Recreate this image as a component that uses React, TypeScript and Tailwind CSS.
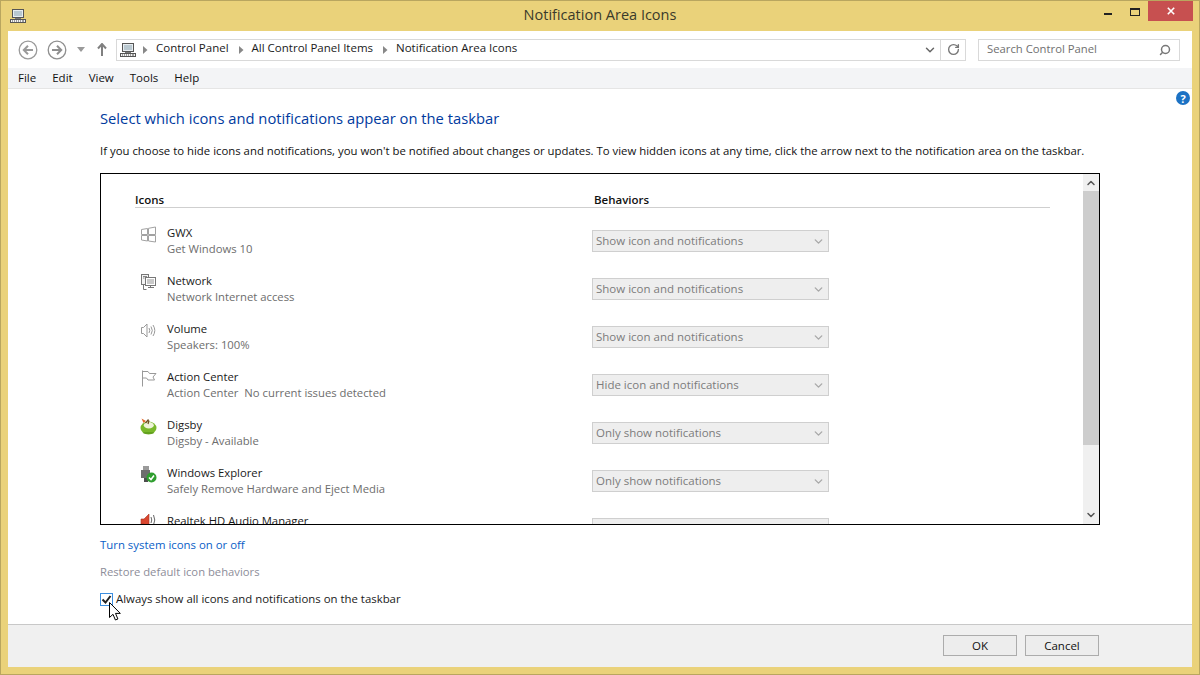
import { ChevronDown, ChevronUp, RotateCw, Search } from "lucide-react";

const font = "font-['Open_Sans','Noto_Sans',sans-serif]";

const rows = [
  { name: "GWX", sub: "Get Windows 10", value: "Show icon and notifications", icon: "gwx" },
  { name: "Network", sub: "Network Internet access", value: "Show icon and notifications", icon: "network" },
  { name: "Volume", sub: "Speakers: 100%", value: "Show icon and notifications", icon: "volume" },
  { name: "Action Center", sub: "Action Center  No current issues detected", value: "Hide icon and notifications", icon: "flag" },
  { name: "Digsby", sub: "Digsby - Available", value: "Only show notifications", icon: "digsby" },
  { name: "Windows Explorer", sub: "Safely Remove Hardware and Eject Media", value: "Only show notifications", icon: "usb" },
  { name: "Realtek HD Audio Manager", sub: "", value: "", icon: "realtek" },
];

function Computer({ className }: { className: string }) {
  return (
    <svg viewBox="0 0 16 16" className={className}>
      <rect x="2.5" y="1.5" width="11" height="8" fill="#e8edf0" stroke="#555" />
      <rect x="4" y="3" width="8" height="5" fill="#b9c8d0" />
      <rect x="5" y="10" width="6" height="1" fill="#777" />
      <rect x="0.5" y="11.5" width="15" height="3" fill="#f4f4f4" stroke="#555" />
      <path d="M2 13h1M4 13h1M6 13h1M8 13h1M10 13h1M12 13h2" stroke="#444" strokeWidth="1" />
    </svg>
  );
}

function NavArrow({ flip, tone }: { flip?: boolean; tone: string }) {
  return (
    <svg viewBox="0 0 20 20" className={`h-5 w-5 ${flip ? "-scale-x-100" : ""}`}>
      <circle cx="10" cy="10" r="8.8" fill="#fff" stroke={tone} strokeWidth="1.3" />
      <path d="M15 10H6M10 5.8 5.8 10l4.2 4.2" fill="none" stroke={tone} strokeWidth="2" />
    </svg>
  );
}

function Sep() {
  return (
    <svg viewBox="0 0 5 8" className="ml-[10px] mr-[8px] h-2 w-[5px] shrink-0">
      <path d="M0 0l4.5 4L0 8z" fill="#888" />
    </svg>
  );
}

function RowIcon({ kind }: { kind: string }) {
  if (kind === "gwx")
    return (
      <svg viewBox="0 0 17 17" className="h-[17px] w-[17px]">
        <path d="M1.5 3.5 7.5 2.5v6h-6zM8.5 2.3 15.5 1v7.500h-7zM1.500 9.500h6v5.500l-6-1zM8.500 9.500h7V16l-7-1z" fill="#fff" stroke="#a2a2a2" />
      </svg>
    );
  if (kind === "network")
    return (
      <svg viewBox="0 0 17 17" className="h-[17px] w-[17px]">
        <rect x="1.500" y="0.500" width="7" height="10" fill="#f4f4f4" stroke="#777" />
        <rect x="5.500" y="3.500" width="10" height="8" fill="#fff" stroke="#777" />
        <rect x="7" y="5" width="7" height="5" fill="#c9c9c9" />
        <path d="M8 13.500h6M10.500 12v1.500M3.500 11v4.500h3" stroke="#777" fill="none" />
        <path d="M3 2.500h4M3 4h1.500" stroke="#888" />
      </svg>
    );
  if (kind === "volume")
    return (
      <svg viewBox="0 0 17 17" className="h-[17px] w-[17px]">
        <path d="M1.500 5.500h2l3.500-3.500v13l-3.500-3.500h-2z" fill="#fff" stroke="#999" />
        <path d="M9 6q1.500 2.500 0 5M11 4.500q2.600 4 0 8M13 3q3.600 5.500 0 11" fill="none" stroke="#999" />
      </svg>
    );
  if (kind === "flag")
    return (
      <svg viewBox="0 0 17 17" className="h-[17px] w-[17px]">
        <path d="M2.500 0.500v16M2.500 1.500h5.500l1.500 2h6.500l-3 3.500 1.500 3H8l-1.500-2h-4" fill="#fff" stroke="#999" />
      </svg>
    );
  if (kind === "digsby")
    return (
      <svg viewBox="0 0 17 17" className="h-[17px] w-[17px]">
        <ellipse cx="8.500" cy="10" rx="8" ry="6.500" fill="#79b82a" />
        <ellipse cx="8.800" cy="7.300" rx="5" ry="3.200" fill="#eef3d8" />
        <path d="M1.500 0.500l4.500 2.500-2.500 2z" fill="#e0672a" />
        <path d="M5.500 5l3-3.500M8 6l1-3.500" stroke="#6b4a22" strokeWidth="1.200" />
        <path d="M3.500 15h10" stroke="#4f8a15" />
      </svg>
    );
  if (kind === "usb")
    return (
      <svg viewBox="0 0 17 17" className="h-[17px] w-[17px]">
        <rect x="3" y="0" width="6" height="4" fill="#9a9a9a" />
        <rect x="1" y="4" width="9" height="8" fill="#6d6d6d" />
        <rect x="4" y="12" width="4" height="4" fill="#4d4d4d" />
        <circle cx="11.500" cy="11.500" r="5" fill="#2f9e2f" />
        <path d="M9 11.500l2 2 3-4" fill="none" stroke="#fff" strokeWidth="1.500" />
      </svg>
    );
  return (
    <svg viewBox="0 0 17 17" className="h-[17px] w-[17px]">
      <path d="M1 5h3l5-5v14l-5-4H1z" fill="#d9462f" stroke="#a8321f" strokeWidth="0.600" />
      <path d="M11 3q1.500 3 0 6M13.500 1q2.500 5 0 10" fill="none" stroke="#666" />
    </svg>
  );
}

function Row({ name, sub, value, icon }: { name: string; sub: string; value: string; icon: string }) {
  return (
    <div className="flex h-12 shrink-0">
      <div className="flex w-[491px] shrink-0 pl-[39px] pt-[4px]">
        <div className="w-[27px]">
          <RowIcon kind={icon} />
        </div>
        <div className="-mt-[1px] whitespace-pre text-[11.3px] leading-[15px]">
          <div className="text-[#1a1a1a]">{name}</div>
          <div className="mt-[1px] text-[#6d6d6d]">{sub}</div>
        </div>
      </div>
      <div className="mt-[8px] flex h-[22px] w-[237px] items-center justify-between border border-[#cfcfcf] bg-[#eeeeee] pl-[3px] pr-[3px] text-[11.5px] text-[#7c7c7c]">
        <span className="mb-[1px]">{value}</span>
        <ChevronDown className="h-[13px] w-[13px] text-[#a8a8a8]" strokeWidth={2.5} />
      </div>
    </div>
  );
}

export default function App() {
  return (
    <div className={`${font} relative flex h-[675px] w-[1200px] flex-col overflow-hidden border border-[#b9a65f] bg-[#ead27a] text-[11.5px] text-[#1a1a1a]`}>
      {/* title bar */}
      <div className="relative flex h-[30px] shrink-0 items-center pl-[9px]">
        <Computer className="h-4 w-4" />
        <div className="absolute inset-x-0 top-[5px] text-center text-[14.5px] leading-[18px] text-[#3a3a2a]">Notification Area Icons</div>
        <div className="ml-auto flex h-[20px] items-start self-start">
          <div className="mr-[18px] mt-[12px] h-[2px] w-[8px] bg-[#222]" />
          <div className="mr-[8px] mt-[7px] h-[8px] w-[10px] border border-t-2 border-[#222]" />
          <div className="mr-[6px] flex h-[20px] w-[45px] items-center justify-center bg-[#c75050]">
            <svg viewBox="0 0 10 10" className="h-2 w-2">
              <path d="M1 1l8 8M9 1l-8 8" stroke="#fff" strokeWidth="2" />
            </svg>
          </div>
        </div>
      </div>

      <div className="relative mx-[7px] flex min-h-0 flex-1 flex-col bg-white">
        {/* nav row */}
        <div className="flex h-[37px] shrink-0 items-center pl-[10px] pr-[12px]">
          <NavArrow tone="#9a9a9a" />
          <div className="w-[9px]" />
          <NavArrow flip tone="#8f8f8f" />
          <svg viewBox="0 0 8 5" className="ml-[10px] h-[5px] w-2">
            <path d="M0 0h8L4 5z" fill="#9a9a9a" />
          </svg>
          <svg viewBox="0 0 10 13" className="ml-[12px] h-[13px] w-[10px]">
            <path d="M5 1v12M1 5.500 5 1l4 4.500" fill="none" stroke="#808080" strokeWidth="2" />
          </svg>
          <div className="ml-[9px] flex h-[22px] w-[850px] shrink-0 items-center border border-[#d9d9d9] pl-[3px]">
            <Computer className="-mr-[3px] h-4 w-4 shrink-0" />
            <Sep />
            <span className="mb-[3px]">Control Panel</span>
            <Sep />
            <span className="mb-[3px]">All Control Panel Items</span>
            <Sep />
            <span className="mb-[3px]">Notification Area Icons</span>
            <ChevronDown className="ml-auto mr-[3px] h-[14px] w-[14px] text-[#666]" strokeWidth={2.5} />
            <div className="flex h-full w-[25px] items-center justify-center border-l border-[#d9d9d9]">
              <RotateCw className="h-[13px] w-[13px] text-[#777]" strokeWidth={2.5} />
            </div>
          </div>
          <div className="ml-[12px] flex h-[22px] flex-1 items-center justify-between border border-[#d9d9d9] pl-2 pr-2 text-[11.3px] text-[#707070]">
            <span className="mb-[1px]">Search Control Panel</span>
            <Search className="h-3 w-3 -scale-x-100 text-[#777]" strokeWidth={3} />
          </div>
        </div>

        {/* menu */}
        <div className="flex h-[21px] shrink-0 items-center gap-[16px] border-b border-[#e5e5e5] bg-[#f3f4f6] pl-[10px] text-[#111]">
          <span>File</span>
          <span>Edit</span>
          <span>View</span>
          <span>Tools</span>
          <span>Help</span>
        </div>

        <div className="absolute right-[2px] top-[60px] flex h-[14px] w-[14px] items-center justify-center rounded-full bg-[#1c72c4] text-[11px] font-bold leading-none text-white">?</div>

        {/* body */}
        <div className="flex flex-1 flex-col px-[92px]">
          <div className="mt-[19px] text-[14.75px] leading-5 text-[#003a9e]">Select which icons and notifications appear on the taskbar</div>
          <div className="mt-[15px] whitespace-nowrap text-[11.37px] leading-[16px] text-[#111]">
            If you choose to hide icons and notifications, you won't be notified about changes or updates. To view hidden icons at any time, click the arrow next to the notification area on the taskbar.
          </div>
          <div className="mt-[14px] flex h-[352px] shrink-0 overflow-hidden border border-black">
            <div className="flex min-w-0 flex-1 flex-col overflow-hidden">
              <div className="ml-[34px] mr-[33px] mt-[19px] flex h-[15px] shrink-0 border-b border-[#cfcfcf] text-[11.5px] font-semibold leading-[14px] text-[#111]">
                <div className="w-[459px]">Icons</div>
                <div>Behaviors</div>
              </div>
              <div className="mt-[14px] flex flex-col">
                {rows.map((row) => (
                  <Row key={row.name} {...row} />
                ))}
              </div>
            </div>
            <div className="flex w-[16px] shrink-0 flex-col bg-[#f0f0f0]">
              <div className="flex h-[17px] items-center justify-center">
                <ChevronUp className="h-[12px] w-[12px] text-[#555]" strokeWidth={3} />
              </div>
              <div className="h-[254px] bg-[#cdcdcd]" />
              <div className="flex flex-1 items-end justify-center pb-[3px]">
                <ChevronDown className="h-[12px] w-[12px] text-[#555]" strokeWidth={3} />
              </div>
            </div>
          </div>
          <div className="mt-[12px] text-[11.4px] leading-[16px] text-[#0a5ec7]">Turn system icons on or off</div>
          <div className="mt-[11px] text-[11.25px] leading-[16px] text-[#8d8d99]">Restore default icon behaviors</div>
          <div className="mt-[11px] flex items-center text-[11.4px] leading-[16px]">
            <div className="flex h-[13px] w-[13px] items-center justify-center border border-[#3b8ee0] bg-white">
              <svg viewBox="0 0 11 11" className="h-[11px] w-[11px]">
                <path d="M1.500 5.500 4.500 8.500 9.500 2" fill="none" stroke="#222" strokeWidth="2" />
              </svg>
            </div>
            <span className="ml-[3px]">Always show all icons and notifications on the taskbar</span>
          </div>
        </div>

        {/* footer */}
        <div className="flex h-[43px] shrink-0 items-start justify-end gap-[8px] border-t border-[#c8c8c8] bg-[#f0f0f0] pr-[93px] pt-[10px]">
          <button className="h-[21px] w-[74px] border border-[#acacac] bg-[#ededed] text-[11.5px] leading-none text-[#111]">OK</button>
          <button className="h-[21px] w-[74px] border border-[#acacac] bg-[#ededed] text-[11.5px] leading-none text-[#111]">Cancel</button>
        </div>
      </div>
      <div className="h-[7px] shrink-0" />

      {/* mouse cursor */}
      <svg viewBox="0 0 12 19" className="absolute left-[108px] top-[601px] h-[19px] w-3">
        <path d="M.5.5v15l3.500-3.200 2.400 5.700 2.500-1-2.400-5.600h4.800z" fill="#fff" stroke="#000" strokeWidth="1" />
      </svg>
    </div>
  );
}
